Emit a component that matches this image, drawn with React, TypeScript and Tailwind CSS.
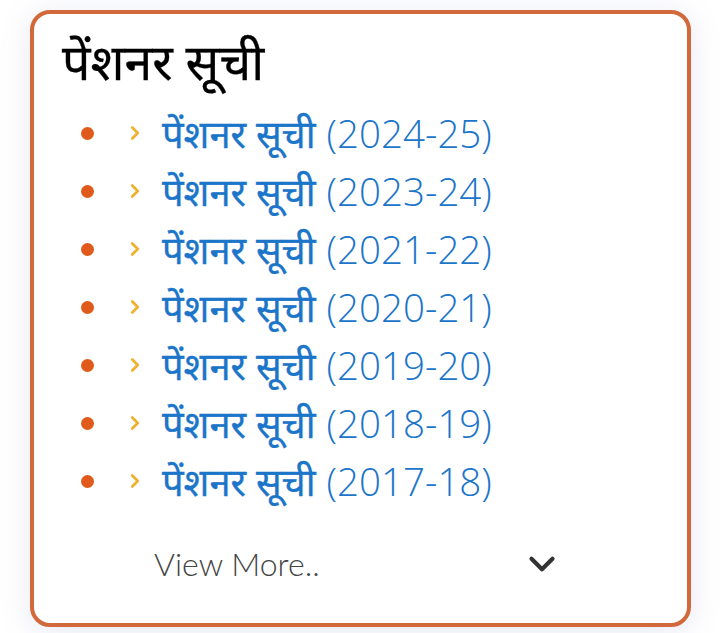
import { ChevronDown, ChevronRight } from "lucide-react"

const years = ["2024-25", "2023-24", "2021-22", "2020-21", "2019-20", "2018-19", "2017-18"]

export default function App() {
  return (
    <div className="min-h-[633px] w-[720px] bg-white pt-[10px] pl-[30px]" style={{ fontFamily: '"Noto Sans", "Open Sans", sans-serif' }}>
      <div className="flex h-[617px] w-[661px] flex-col rounded-[20px] border-4 border-[#d2693a] bg-white shadow-[0_4px_30px_rgba(120,130,190,0.18)]">
        <h2 className="pl-[28px] pt-[17px] text-[50px] font-normal leading-[60px] text-black [-webkit-text-stroke:0.3px_#000]">पेंशनर सूची</h2>
        <ul className="mt-[13px] flex flex-col">
          {years.map((y) => (
            <li key={y} className="flex h-[58px] items-center">
              <span className="ml-[47px] h-[13px] w-[13px] rounded-full bg-[#e05a1c]" />
              <ChevronRight className="ml-[30px] h-[22px] w-[22px] text-[#f0b030]" strokeWidth={3} />
              <span className="ml-[16px] leading-none text-[#1b75c9]">
                <span className="text-[38px] font-normal [-webkit-text-stroke:0.35px_#1b75c9]">पेंशनर सूची</span>
                <span className="ml-[11px] text-[38.5px] font-light" style={{ fontFamily: '"Open Sans", sans-serif' }}>({y})</span>
              </span>
            </li>
          ))}
        </ul>
        <div className="mt-[30px] flex items-center">
          <span className="ml-[120px] text-[32px] font-light text-[#444]" style={{ fontFamily: 'Lato, "Open Sans", sans-serif' }}>View More..</span>
          <ChevronDown className="ml-auto mr-[124px] h-[42px] w-[42px] text-[#333]" strokeWidth={2.4} />
        </div>
      </div>
    </div>
  )
}
